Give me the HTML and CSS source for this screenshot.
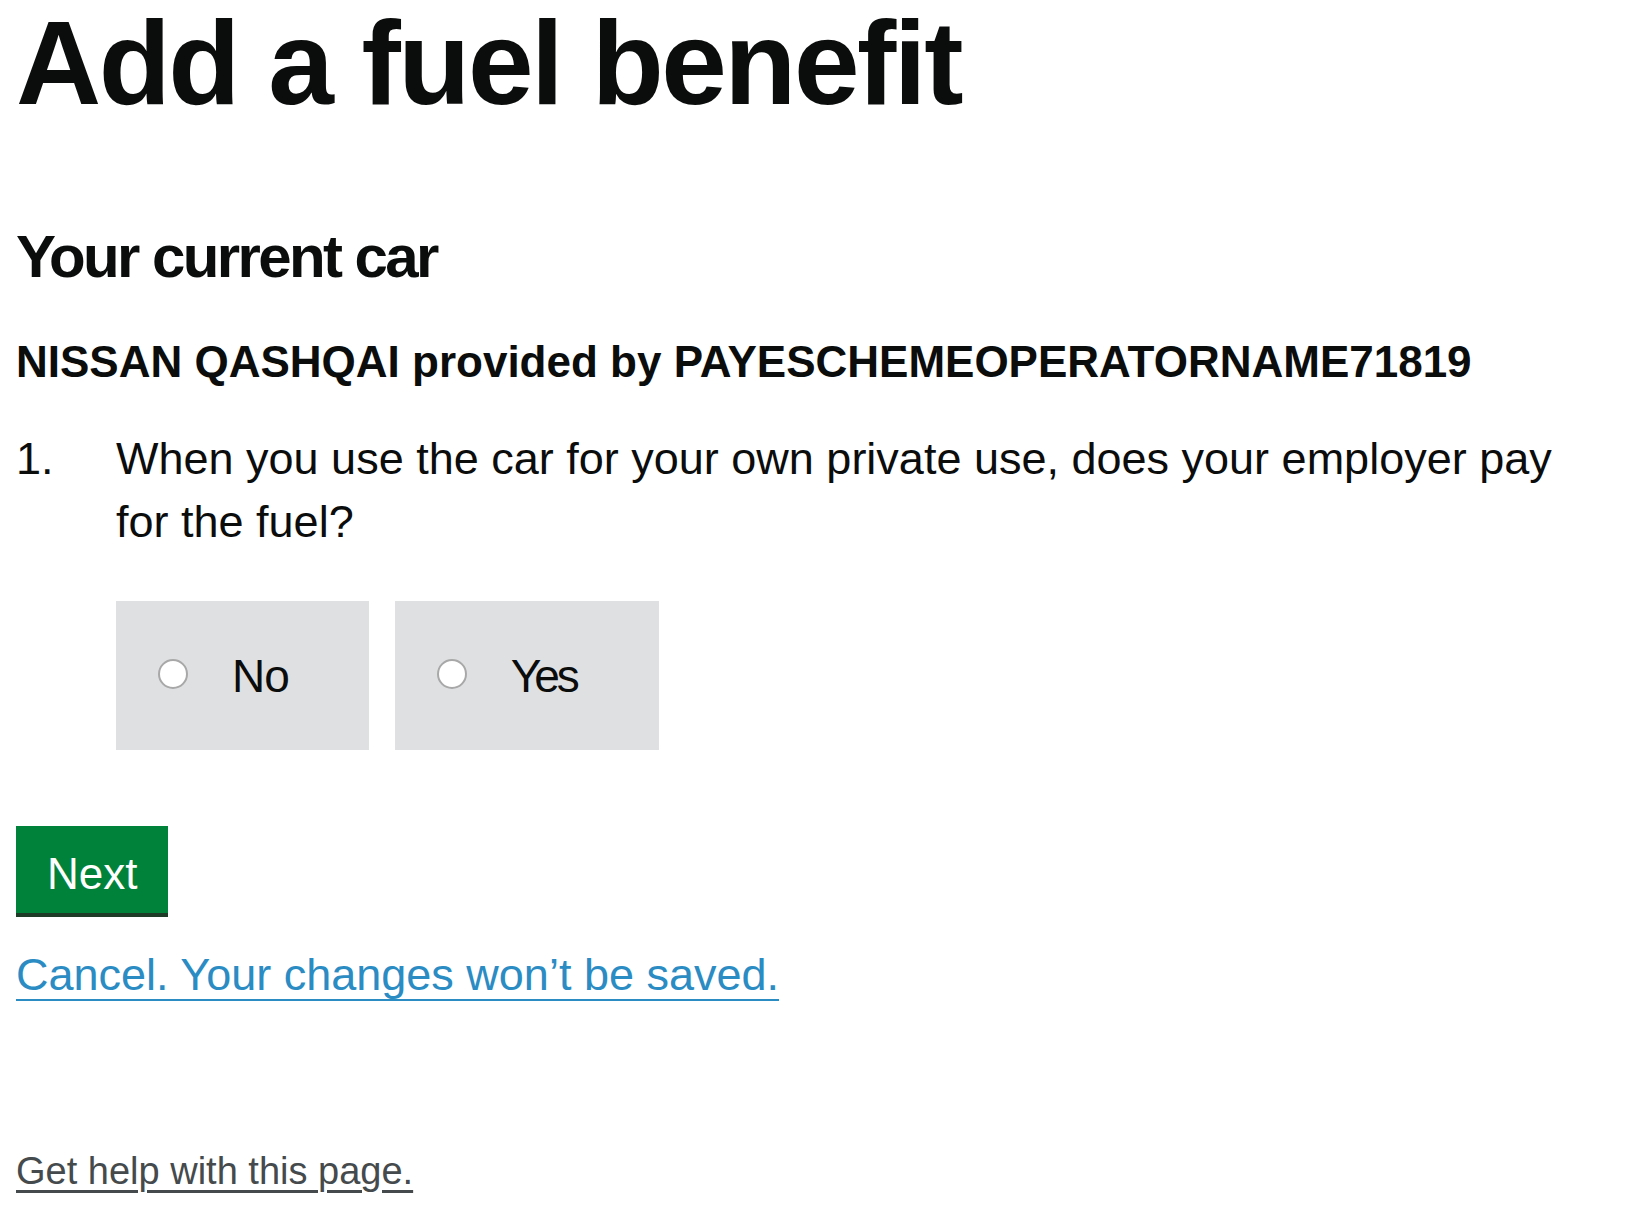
FILE: index.html
```html
<!DOCTYPE html>
<html lang="en">
<head>
<meta charset="utf-8">
<title>Add a fuel benefit</title>
<link rel="stylesheet" href="styles.css">
</head>
<body>
<main class="page">
  <h1 class="title">Add a fuel benefit</h1>
  <h2 class="subtitle">Your current car</h2>
  <p class="car">NISSAN QASHQAI provided by PAYESCHEMEOPERATORNAME71819</p>
  <form class="form">
    <fieldset class="question">
      <legend class="question-legend">
        <span class="question-num">1.</span>
        <span class="question-text">When you use the car for your own private use, does your employer pay for the fuel?</span>
      </legend>
      <div class="options">
        <label class="option">
          <input class="radio" type="radio" name="fuel" value="no">
          <span class="option-label">No</span>
        </label>
        <label class="option option-yes">
          <input class="radio" type="radio" name="fuel" value="yes">
          <span class="option-label">Yes</span>
        </label>
      </div>
    </fieldset>
    <button class="button" type="button">Next</button>
  </form>
  <a class="cancel" href="#">Cancel. Your changes won’t be saved.</a>
  <a class="help" href="#">Get help with this page.</a>
</main>
</body>
</html>
```
FILE: styles.css
```css
html, body {
  margin: 0;
  padding: 0;
  background: #ffffff;
}

body {
  font-family: "Liberation Sans", Arial, sans-serif;
  color: #0b0c0c;
}

.page {
  display: flex;
  flex-direction: column;
  align-items: flex-start;
  padding: 4px 16px 0;
}

.title {
  margin: 0;
  font-size: 118px;
  line-height: 118px;
  font-weight: 700;
  letter-spacing: -2.5px;
}

.subtitle {
  margin: 105px 0 0;
  font-size: 60px;
  line-height: 60px;
  font-weight: 700;
  letter-spacing: -2.6px;
}

.car {
  margin: 53px 0 0;
  font-size: 44px;
  line-height: 44px;
  font-weight: 700;
}

.form {
  display: flex;
  flex-direction: column;
  align-items: flex-start;
  margin: 43px 0 0;
}

.question {
  margin: 0;
  padding: 0;
  border: 0;
  min-width: 0;
}

.question-legend {
  display: flex;
  padding: 0;
  font-size: 45px;
  line-height: 63px;
}

.question-num {
  flex: 0 0 100px;
}

.question-text {
  max-width: 1480px;
}

.options {
  display: flex;
  gap: 26px;
  margin: 48px 0 0 100px;
}

.option {
  display: flex;
  align-items: center;
  gap: 44px;
  height: 149px;
  padding: 0 80px 0 42px;
  background: #dee0e2;
  box-sizing: border-box;
  cursor: pointer;
}

.option-yes {
  padding-right: 82px;
}

.radio {
  appearance: none;
  -webkit-appearance: none;
  margin: -3px 0 0;
  width: 30px;
  height: 30px;
  border-radius: 50%;
  border: 2px solid #a8a8a8;
  background: #ffffff;
  box-sizing: border-box;
}

.option-label {
  font-size: 46px;
  line-height: 50px;
  letter-spacing: -1px;
}

.option-yes .option-label {
  letter-spacing: -3px;
}

.button {
  margin: 76px 0 0;
  padding: 8px 31px 0;
  height: 91px;
  box-sizing: border-box;
  font-family: "Liberation Sans", Arial, sans-serif;
  font-size: 44px;
  line-height: 79px;
  color: #ffffff;
  background: #00823b;
  border: 0;
  border-bottom: 4px solid #1e3b28;
  border-radius: 0;
  cursor: pointer;
}

.cancel {
  margin: 33px 0 0;
  font-size: 45px;
  line-height: 50px;
  color: #2b8cc4;
  text-decoration: underline;
  text-decoration-thickness: 2px;
  text-underline-offset: 9px;
}

.help {
  margin: 149px 0 0;
  font-size: 38px;
  line-height: 44px;
  color: #454a4c;
  text-decoration: underline;
  text-decoration-thickness: 3px;
  text-underline-offset: 6px;
}
```
